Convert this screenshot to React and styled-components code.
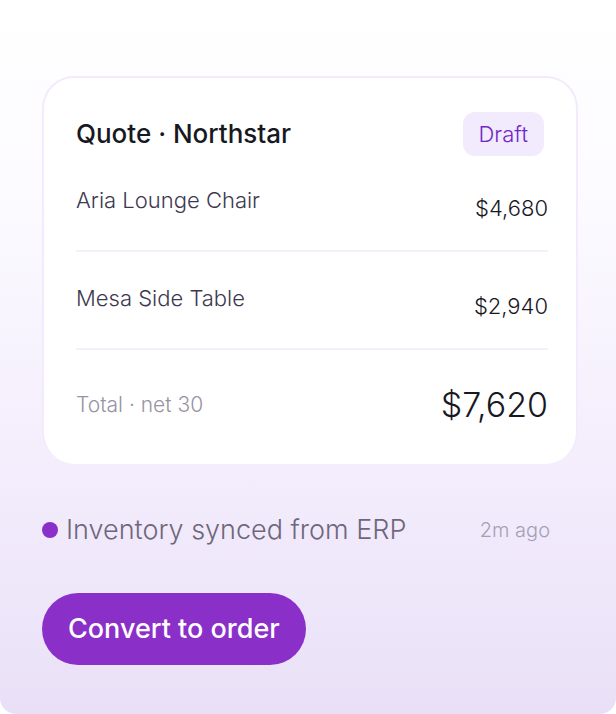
import React from 'react';
import styled, { createGlobalStyle } from 'styled-components';

const items = [
  { name: 'Aria Lounge Chair', price: '$4,680' },
  { name: 'Mesa Side Table', price: '$2,940' },
];

function App() {
  return (
    <>
      <GlobalStyle />
      <Panel>
        <Card>
          <CardHeader>
            <Title>Quote · Northstar</Title>
            <Badge>Draft</Badge>
          </CardHeader>
          <Lines>
            <tbody>
              {items.map((item) => (
                <tr key={item.name}>
                  <ItemName scope="row">{item.name}</ItemName>
                  <Price>{item.price}</Price>
                </tr>
              ))}
            </tbody>
            <tfoot>
              <tr>
                <TotalLabel scope="row">Total · net 30</TotalLabel>
                <TotalPrice>$7,620</TotalPrice>
              </tr>
            </tfoot>
          </Lines>
        </Card>
        <Status>
          <Dot />
          <StatusText>Inventory synced from ERP</StatusText>
          <Time>2m ago</Time>
        </Status>
        <ConvertButton type="button">Convert to order</ConvertButton>
      </Panel>
    </>
  );
}

export default App;

const GlobalStyle = createGlobalStyle`
  * {
    box-sizing: border-box;
  }
  body {
    margin: 0;
    background: #fff;
    color: #18181f;
    font-family: Inter, 'Open Sans', sans-serif;
    font-weight: 300;
  }
`;
const Panel = styled.main`
  min-height: 100vh;
  padding: 76px 38px 48px 42px;
  border-radius: 0 0 16px 16px;
  background: linear-gradient(#fff 0%, #fbfaff 30%, #f3ecfc 68%, #e9e0f7 100%);
`;
const Card = styled.section`
  padding: 34px 28px 4px 32px;
  border: 2px solid #f3eafd;
  border-bottom: 0;
  border-radius: 32px;
  background: #fff;
`;
const CardHeader = styled.header`
  display: flex;
  align-items: center;
  justify-content: space-between;
  padding-right: 4px;
`;
const Title = styled.h1`
  margin: 0;
  font-size: 26px;
  line-height: 44px;
  font-weight: 500;
`;
const Badge = styled.span`
  padding: 0 16px;
  border-radius: 12px;
  background: #f2eafd;
  color: #7127c8;
  font-size: 22px;
  line-height: 44px;
`;
const Lines = styled.table`
  width: 100%;
  margin-top: -2px;
  border-collapse: separate;
  border-spacing: 0;
`;
const Cell = styled.td`
  padding: 0;
  border-bottom: 2px solid #f3f0fb;
  font-size: 22px;
  line-height: 32px;
`;
const ItemName = styled(Cell).attrs({ as: 'th' })`
  padding: 30px 0 34px;
  color: #3d3850;
  font-weight: 300;
  text-align: left;
`;
const Price = styled(Cell)`
  padding: 38px 0 26px;
  text-align: right;
`;
const TotalLabel = styled(ItemName)`
  padding: 32px 0;
  border: 0;
  color: #9793a5;
  font-size: 21px;
`;
const TotalPrice = styled(Price)`
  padding: 32px 0;
  border: 0;
  font-size: 34px;
  line-height: 46px;
`;
const Status = styled.div`
  display: flex;
  align-items: center;
  gap: 8px;
  padding: 46px 28px 43px 0;
`;
const Dot = styled.span`
  width: 16px;
  height: 16px;
  border-radius: 50%;
  background: #8b2fc9;
`;
const StatusText = styled.span`
  flex: 1;
  color: #6e677c;
  font-size: 27px;
  line-height: 40px;
`;
const Time = styled.time`
  color: #a59fb5;
  font-size: 20px;
`;
const ConvertButton = styled.button`
  padding: 16px 26px;
  border: 0;
  border-radius: 36px;
  background: #8b2fc9;
  color: #fff;
  font: 500 27px/40px Inter, 'Open Sans', sans-serif;
  cursor: pointer;
`;
